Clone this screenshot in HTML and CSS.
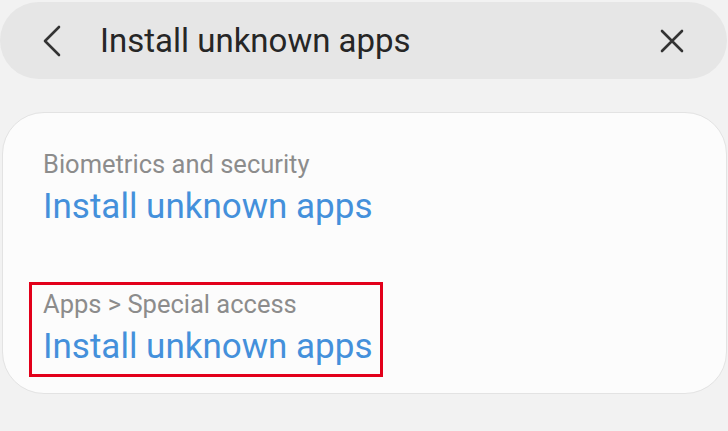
FILE: index.html
```html
<!doctype html>
<html><head>
    <meta charset="utf-8">
    <link rel="stylesheet" href="styles.css">
</head>
<body>
    <div class='search-bar'>
        <svg class='back-icon' width='20' height='32' viewBox='0 0 20 32'>
            <path d='M17 2 L3 16 L17 30' fill='none' stroke='#333' stroke-width='2.6' stroke-linecap='round' stroke-linejoin='round'/>
        </svg>
        <div class='search-text'>Install unknown apps</div>
        <svg class='close-icon' width='24' height='24' viewBox='0 0 24 24'>
            <path d='M2 2 L22 22 M22 2 L2 22' fill='none' stroke='#333' stroke-width='2.6' stroke-linecap='round'/>
        </svg>
    </div>

    <div class='card'>
        <div class='result'>
            <div class='path'>Biometrics and security</div>
            <div class='title'>Install unknown apps</div>
        </div>
        <div class='result highlight'>
            <div class='path'>Apps &gt; Special access</div>
            <div class='title'>Install unknown apps</div>
        </div>
    </div>
</body></html>
```

FILE: styles.css
```css
body {
    margin: 0;
    background: #f2f2f2;
    font-family: Roboto, "Liberation Sans", sans-serif;
}

.search-bar {
    display: flex;
    align-items: center;
    height: 77px;
    margin: 2px 1px 0 0;
    padding: 0 43px 0 42px;
    border-radius: 39px;
    background: #e6e6e6;
}

.back-icon {
    flex: none;
}

.search-text {
    flex: 1;
    margin-left: 38px;
    font-size: 33px;
    color: #262626;
}

.close-icon {
    flex: none;
}

/* 搜索结果卡片 */
.card {
    height: 251px;
    margin: 33px 1px 0 2px;
    padding: 29px 26px 0;
    border: 1px solid #e3e3e3;
    border-radius: 42px;
    background: #fcfcfc;
}

.result {
    width: 326px;
    height: 85px;
    padding: 4px 11px 0;
    border: 3px solid transparent;
    margin-bottom: 45px;
    white-space: nowrap;
}

.highlight {
    border-color: #e2001a;
}

.path {
    font-size: 25.5px;
    line-height: 30px;
    color: #8c8c8c;
}

.title {
    margin-top: 7px;
    font-size: 35px;
    line-height: 41px;
    color: #4490db;
}
```
